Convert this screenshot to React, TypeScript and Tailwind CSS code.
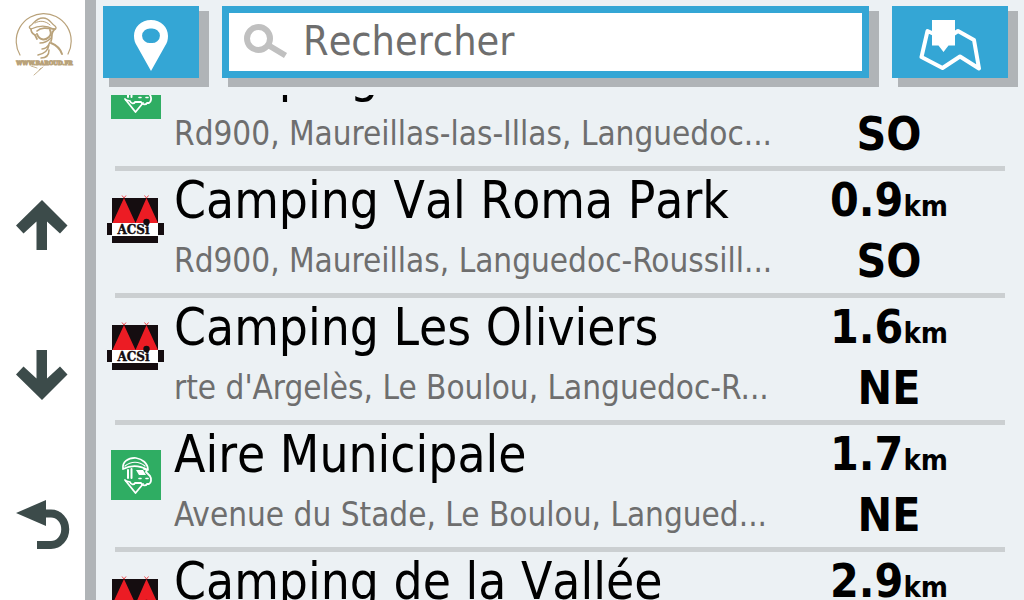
interface Place { id: number; name: string; address: string; distance: string; heading: string; kind: 'acsi' | 'aire'; }

const PLACES: Place[] = [
  { id: 1, name: 'Camping', address: 'Rd900, Maureillas-las-Illas, Languedoc...', distance: '0.8', heading: 'SO', kind: 'aire' },
  { id: 2, name: 'Camping Val Roma Park', address: 'Rd900, Maureillas, Languedoc-Roussill...', distance: '0.9', heading: 'SO', kind: 'acsi' },
  { id: 3, name: 'Camping Les Oliviers', address: "rte d'Argelès, Le Boulou, Languedoc-R...", distance: '1.6', heading: 'NE', kind: 'acsi' },
  { id: 4, name: 'Aire Municipale', address: 'Avenue du Stade, Le Boulou, Langued...', distance: '1.7', heading: 'NE', kind: 'aire' },
  { id: 5, name: 'Camping de la Vallée', address: 'Route de Céret, Languedoc-Roussillon', distance: '2.9', heading: 'SO', kind: 'acsi' },
];

const Logo = () => (
  <svg width="64" height="66" viewBox="12 12 64 66" fill="none" stroke="#b9a27a" strokeLinecap="round" role="img" aria-label="www.baroud.fr">
    <path d="M20 55A27.5 27.5 0 1 1 68 54" strokeWidth="1.2" />
    <path d="M30 26C34 24 35 18 43 18C50 18 51 24 55 26C57 28 56 30 53 29C48 26 42 24 31 29C29 28 29 27 30 26Z" strokeWidth="1.3" />
    <path d="M35 23C40 20 46 21 50 25" strokeWidth="1" />
    <path d="M31 29C31 32 33 34 35 35M37 31C41 27 47 28 54 29" strokeWidth="1.7" />
    <path d="M37 34C39 40 45 41 49 37C51 35 51 32 50 30" strokeWidth="2" />
    <path d="M55 29C50 33 53 37 51 41M35 35L37 39" strokeWidth="1.7" />
    <path d="M40 43C44 43 48 41 51 38M42 49C45 49 48 47 50 42M38 55C43 54 48 52 49 45M41 58C46 58 49 55 49 50" strokeWidth="1.5" />
    <path d="M51 43C56 45 60 48 62 54" strokeWidth="2" />
    <path d="M31 66L37 68M43 67L34 75M41 68L39 70" strokeWidth="0.8" />
    <text x="44.5" y="65" textAnchor="middle" fill="#a8916b" className="font-['DejaVu_Serif_Condensed','DejaVu_Serif',serif] text-[6px] font-bold">WWW.BAROUD.FR</text>
  </svg>
);

const AcsiIcon = () => (
  <svg width="57" height="54" viewBox="107 194 57 54" role="img" aria-label="ACSI">
    <path d="M122 195.500L124 198L126 195.500M144.500 195.500L146.500 198L148.500 195.500" fill="none" stroke="#ee4a4e" />
    <path d="M112 198H158V243H112Z" fill="#150d10" />
    <path d="M124 198L135.500 223H112.500ZM146.500 198L158 223H135.500Z" fill="#ec1c24" />
    <path d="M107 223H164V235H107Z" fill="#150d10" />
    <path d="M112 223H158V236H112Z" fill="#fff" />
    <circle cx="146.500" cy="222" r="3.200" fill="#150d10" />
    <text x="133.500" y="234" textAnchor="middle" fill="#150d10" stroke="#150d10" strokeWidth="0.4" className="font-['DejaVu_Serif',serif] text-[12px] font-bold">ACSi</text>
  </svg>
);

const AireIcon = () => (
  <svg width="50" height="50" viewBox="0 0 50 50" fill="none" stroke="#fff" strokeLinejoin="round" strokeLinecap="round" role="img" aria-label="Aire">
    <path d="M0 0H50V50H0Z" fill="#2fad63" stroke="none" />
    <path d="M12 19C11 12 17 7.500 25 8C31 9 37 13 37 20C28 15 20 15 12 19Z" strokeWidth="1.700" />
    <path d="M14 16C20 11 28 11 34 16" strokeWidth="1.200" />
    <path d="M17 20V28M20.500 19V28" strokeWidth="2" />
    <path d="M25 20H32L35 25H28Z" fill="#fff" stroke="none" />
    <path d="M33 19L36 20L35 22L39 26C41 29 40 33 38 34H36C35 36 31 36 30 33H24C23 35 20 35 19 32L15 31" strokeWidth="1.800" />
    <path d="M14 30L24.500 43L32 34" strokeWidth="1.800" />
    <path d="M28 28.500H30M35 28.500H37" strokeWidth="1.600" />
  </svg>
);

const Row = ({ place }: { place: Place }) => (
  <li>
    <div className="flex h-[122px] items-start pl-[11px] pr-5">
      <div className="flex h-[100px] w-[57px] shrink-0 items-center justify-center">
        {place.kind === 'acsi' ? <AcsiIcon /> : <AireIcon />}
      </div>
      <div className="min-w-0 flex-1 whitespace-nowrap pl-[10px]">
        <h2 className="text-[51px] leading-[59px] text-black [font-kerning:none]">{place.name}</h2>
        <p className="text-[33px] leading-[61px] text-[#6e6e6e]">{place.address}</p>
      </div>
      <div className="w-[230px] shrink-0 text-center text-[46px] font-bold text-black">
        <p className="leading-[59px]">{place.distance}<span className="text-[29px] leading-none">km</span></p>
        <p className="leading-[63px]">{place.heading}</p>
      </div>
    </div>
    <div className="mx-[19px] h-[5px] bg-[#cbcfd1]" />
  </li>
);

const App = () => (
  <div className="flex h-screen overflow-hidden bg-[#ecf1f4] font-['DejaVu_Sans_Condensed','DejaVu_Sans',sans-serif]">
    <nav className="grid w-24 shrink-0 grid-rows-4 border-r-[11px] border-[#b0b4b7] bg-white">
      <div className="flex justify-center pt-3 pl-[3px]"><Logo /></div>
      <button type="button" aria-label="Monter" className="flex items-center justify-center pr-0.5">
        <svg width="52" height="50" viewBox="0 0 52 50" fill="#3c4b4a"><path d="M26 0L51.500 25.500L44 33.500L31 21.500V50H20.500V21.500L7.500 33.500L0 25.500Z" /></svg>
      </button>
      <button type="button" aria-label="Descendre" className="flex items-center justify-center pr-0.5">
        <svg width="52" height="50" viewBox="0 0 52 50" fill="#3c4b4a"><path d="M26 50L51.500 24.500L44 16.500L31 28.500V0H20.500V28.500L7.500 16.500L0 24.500Z" /></svg>
      </button>
      <button type="button" aria-label="Retour" className="flex items-center justify-center">
        <svg width="54" height="50" viewBox="0 0 54 50"><path d="M0 13L30 0V26Z" fill="#3c4b4a" /><path d="M29 13.500H35A14 15.500 0 0 1 35 45H21" fill="none" stroke="#3c4b4a" strokeWidth="8" /></svg>
      </button>
    </nav>
    <main className="flex min-w-0 flex-1 flex-col">
      <header className="flex h-[95px] shrink-0 items-start gap-[23px] pt-1.5 pr-4 pl-[7px]">
        <button type="button" aria-label="Position" className="flex h-[72px] w-24 shrink-0 items-center justify-center bg-[#34a6d5] shadow-[8px_7px_0_2px_#b0b4b7]">
          <svg width="40" height="60" viewBox="0 0 40 60" fill="#fff"><path fillRule="evenodd" d="M20 8C10 8 3 15 3 24C3 28 4 31 6 34L20 59L34 34C36 31 37 28 37 24C37 15 30 8 20 8ZM20 16.500A8 7.300 0 1 1 20 31A8 7.300 0 1 1 20 16.500Z" /></svg>
        </button>
        <label className="flex h-[72px] min-w-0 flex-1 items-center gap-[15px] border-[7px] border-[#34a6d5] bg-white pl-[15px] shadow-[8px_7px_0_2px_#b0b4b7]">
          <svg width="44" height="36" viewBox="0 0 44 36" className="shrink-0" fill="none" stroke="#c0c0c0" strokeWidth="6"><circle cx="14.500" cy="14.500" r="11.500" /><path d="M24 21L41.500 31.500" /></svg>
          <input type="text" aria-label="Rechercher" placeholder="Rechercher" className="w-full min-w-0 flex-1 pb-0.5 text-[41px] leading-[54px] text-[#6e6e6e] outline-none [font-kerning:none] placeholder:text-[#6e6e6e]" />
        </label>
        <button type="button" aria-label="Carte" className="flex h-[72px] w-[116px] shrink-0 items-center justify-center bg-[#34a6d5] shadow-[8px_7px_0_2px_#b0b4b7]">
          <svg width="62" height="60" viewBox="919 12 62 60" fill="#fff" stroke="#fff">
            <path d="M934 34L927.500 31L921.500 57L942.500 68L960 56.500L979 68.500L974 40L958 31L952 35" fill="none" strokeWidth="4" strokeLinejoin="round" />
            <path d="M932 20H955V45.500H948.500L943.500 52L938.500 45.500H932Z" stroke="none" />
          </svg>
        </button>
      </header>
      <div className="min-h-0 flex-1 overflow-hidden">
        {/* list is scrolled part of the way through its first row */}
        <ul className="-mt-[51px]">
          {PLACES.map(p => <Row key={p.id} place={p} />)}
        </ul>
      </div>
    </main>
  </div>
);

export default App;
